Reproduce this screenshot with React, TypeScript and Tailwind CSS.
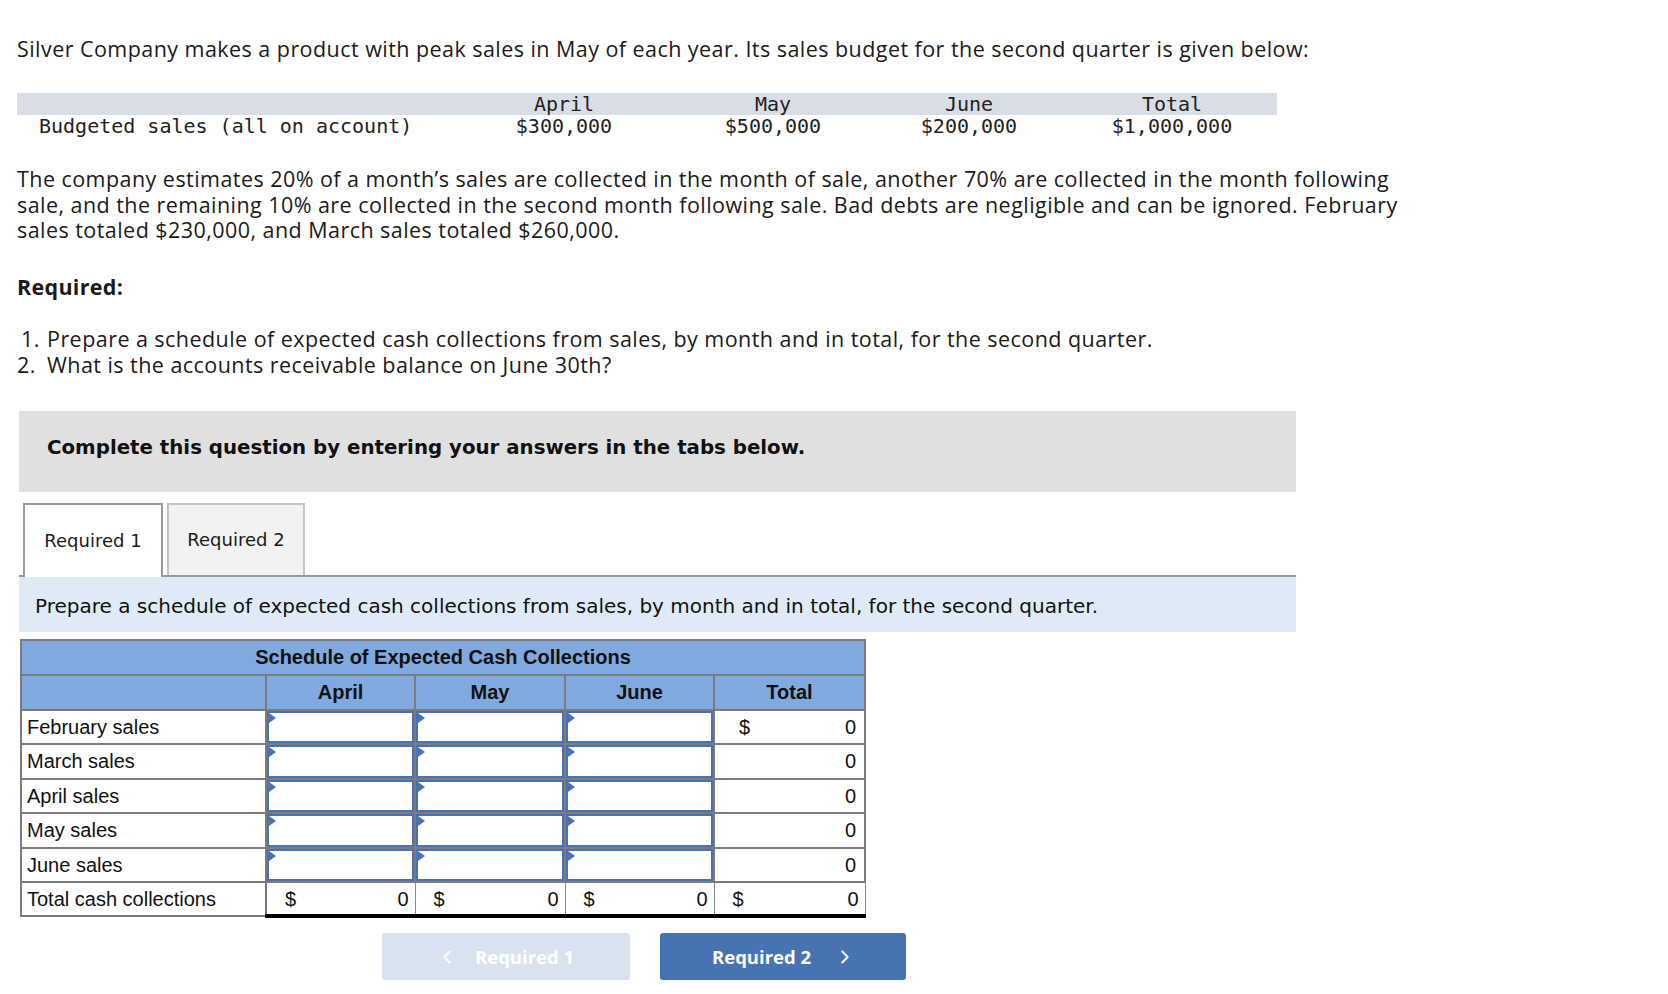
import React from 'react';
import { FiChevronLeft, FiChevronRight } from 'react-icons/fi';

const budget = [
  { month: 'April', amount: '$300,000' },
  { month: 'May', amount: '$500,000' },
  { month: 'June', amount: '$200,000' },
  { month: 'Total', amount: '$1,000,000' },
];

const rows = ['February sales', 'March sales', 'April sales', 'May sales', 'June sales'];

const InputCell: React.FC = () => (
  <td className="border-2 border-[#7b7b7b] p-0 h-[34px]">
    <div className="relative h-full w-full border-2 border-[#4a72b2] bg-white">
      <span className="absolute left-0 top-0 h-0 w-0 border-y-[5px] border-l-[7px] border-y-transparent border-l-[#4a72b2]" />
    </div>
  </td>
);

const App: React.FC = () => {
  return (
    <div className="min-h-[994px] bg-white text-[#1a1a1a] pl-[17px] pt-[36px] font-['Open_Sans',sans-serif]">
      <p className="text-[21.5px] leading-[26px] tracking-[0.45px] whitespace-nowrap">
        Silver Company makes a product with peak sales in May of each year. Its sales budget for the second quarter is given below:
      </p>

      {/* budget table */}
      <div className="mt-[31px] w-[1260px] font-['DejaVu_Sans_Mono',monospace] text-[20px] leading-[21px] text-[#222]">
        <div className="grid grid-cols-[452px_190px_228px_164px_226px] bg-[#d9dde6]">
          <div />
          {budget.map((b) => (
            <div key={b.month} className={`pt-[1px] text-center ${b.month === 'Total' ? 'pl-[16px]' : ''}`}>
              {b.month}
            </div>
          ))}
        </div>
        <div className="grid grid-cols-[452px_190px_228px_164px_226px] h-[22px] pt-[1px]">
          <div className="pl-[22px]">Budgeted sales (all on account)</div>
          {budget.map((b) => (
            <div key={b.month} className={`text-center ${b.month === 'Total' ? 'pl-[16px]' : ''}`}>
              {b.amount}
            </div>
          ))}
        </div>
      </div>

      <p className="mt-[29px] text-[21.5px] leading-[25.5px] tracking-[0.45px] whitespace-nowrap">
        The company estimates 20% of a month’s sales are collected in the month of sale, another 70% are collected in the month following
        <br />
        sale, and the remaining 10% are collected in the second month following sale. Bad debts are negligible and can be ignored. February
        <br />
        sales totaled $230,000, and March sales totaled $260,000.
      </p>

      <p className="mt-[31px] text-[21.5px] leading-[26px] tracking-[0.3px] font-bold">Required:</p>

      <div className="mt-[26px] text-[21.5px] leading-[26px] tracking-[0.45px]">
        <div className="flex">
          <span className="w-[18px] pl-[4px]">1.</span>
          <span className="ml-[12px]">Prepare a schedule of expected cash collections from sales, by month and in total, for the second quarter.</span>
        </div>
        <div className="flex">
          <span className="w-[18px]">2.</span>
          <span className="ml-[12px]">What is the accounts receivable balance on June 30th?</span>
        </div>
      </div>

      {/* answer panel */}
      <div className="ml-[2px] mt-[33px] w-[1277px] font-['DejaVu_Sans',sans-serif]">
        <div className="h-[81px] bg-[#e0e0e0] pl-[28px] pt-[22px] text-[19.8px] font-bold text-[#111]">
          Complete this question by entering your answers in the tabs below.
        </div>

        <div className="mt-[11px] flex gap-[4px] pl-[4px] border-b-2 border-[#9a9a9a]">
          <div className="-mb-[2px] flex h-[74px] w-[140px] items-center justify-center border-2 border-b-0 border-[#9a9a9a] bg-white text-[18px]">
            Required 1
          </div>
          <div className="flex h-[72px] w-[138px] items-center justify-center border-2 border-b-0 border-[#c4c4c4] bg-[#f2f2f2] text-[18px]">
            Required 2
          </div>
        </div>

        <div className="h-[55px] bg-[#deebf7] pl-[16px] pt-[14px] text-[20px] text-[#111]">
          Prepare a schedule of expected cash collections from sales, by month and in total, for the second quarter.
        </div>

        {/* schedule table */}
        <table className="ml-[1px] mt-[7px] border-collapse font-['Liberation_Sans',Arial,sans-serif] text-[20px] text-[#111]">
          <colgroup>
            <col className="w-[245px]" />
            <col className="w-[149px]" />
            <col className="w-[150px]" />
            <col className="w-[149px]" />
            <col className="w-[151px]" />
          </colgroup>
          <thead>
            <tr className="h-[35px] bg-[#80aadf]">
              <th colSpan={5} className="border-2 border-[#7b7b7b] text-center font-bold">
                Schedule of Expected Cash Collections
              </th>
            </tr>
            <tr className="h-[35px] bg-[#80aadf]">
              <th className="border-2 border-[#7b7b7b]" />
              <th className="border-2 border-[#7b7b7b] font-bold">April</th>
              <th className="border-2 border-[#7b7b7b] font-bold">May</th>
              <th className="border-2 border-[#7b7b7b] font-bold">June</th>
              <th className="border-2 border-[#7b7b7b] font-bold">Total</th>
            </tr>
          </thead>
          <tbody>
            {rows.map((r, i) => (
              <tr key={r} className="h-[34.5px]">
                <td className="border-2 border-[#7b7b7b] pl-[5px]">{r}</td>
                <InputCell />
                <InputCell />
                <InputCell />
                <td className="border-2 border-[#7b7b7b] pl-[24px] pr-[8px]">
                  <div className="flex justify-between">
                    <span>{i === 0 ? '$' : ''}</span>
                    <span>0</span>
                  </div>
                </td>
              </tr>
            ))}
            <tr className="h-[34px]">
              <td className="border-2 border-[#7b7b7b] pl-[5px]">Total cash collections</td>
              {[0, 1, 2, 3].map((c) => (
                <td
                  key={c}
                  className="border-x border-x-[#8a8a8a] border-t-2 border-t-black border-b-[4px] border-b-black pl-[18px] pr-[6px]"
                >
                  <div className="flex justify-between">
                    <span>$</span>
                    <span>0</span>
                  </div>
                </td>
              ))}
            </tr>
          </tbody>
        </table>

        <div className="mt-[15px] flex gap-[30px] pl-[363px] font-['Open_Sans',sans-serif] text-[18.5px] font-bold text-white">
          <button className="flex h-[47px] w-[248px] items-center gap-[17px] rounded-[3px] bg-[#d9e3f0] pl-[54px]">
            <FiChevronLeft className="text-[22px]" />
            <span>Required 1</span>
          </button>
          <button className="flex h-[47px] w-[246px] items-center gap-[23px] rounded-[3px] bg-[#4773b3] pl-[52px]">
            <span>Required 2</span>
            <FiChevronRight className="text-[22px]" />
          </button>
        </div>
      </div>
    </div>
  );
};

export default App;
